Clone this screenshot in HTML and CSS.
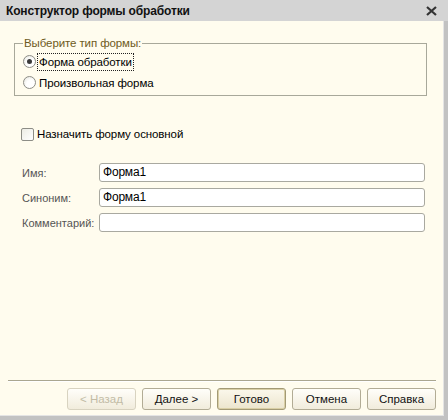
FILE: index.html
```html
<!DOCTYPE html>
<html lang="ru">
<head>
<meta charset="utf-8">
<title>Конструктор формы обработки</title>
<link rel="stylesheet" href="styles.css">
</head>
<body>
<div class="window">
  <div class="titlebar">
    <span class="title">Конструктор формы обработки</span>
    <svg class="close" width="11" height="10" viewBox="0 0 11 10"><path d="M1 1 L10 9 M10 1 L1 9" stroke="#333" stroke-width="2.2" fill="none"/></svg>
  </div>
  <div class="client">
    <fieldset class="group">
      <legend class="legend">Выберите тип формы:</legend>
      <div class="radio-row">
        <span class="radio checked"></span>
        <span class="rlabel focus">Форма обработки</span>
      </div>
      <div class="radio-row">
        <span class="radio"></span>
        <span class="rlabel">Произвольная форма</span>
      </div>
    </fieldset>
    <div class="check-row">
      <span class="checkbox"></span>
      <span class="clabel">Назначить форму основной</span>
    </div>
    <div class="fields">
      <span class="flabel">Имя:</span><div class="input">Форма1</div>
      <span class="flabel">Синоним:</span><div class="input">Форма1</div>
      <span class="flabel">Комментарий:</span><div class="input"></div>
    </div>
    <div class="spacer"></div>
    <div class="separator"></div>
    <div class="buttons">
      <div class="btn disabled">&lt; Назад</div>
      <div class="btn">Далее &gt;</div>
      <div class="btn default">Готово</div>
      <div class="btn">Отмена</div>
      <div class="btn">Справка</div>
    </div>
  </div>
</div>
</body>
</html>
```
FILE: styles.css
```css
html, body {
  margin: 0;
  padding: 0;
  background: #c4c4c4;
}
body {
  font-family: "Liberation Sans", Arial, sans-serif;
  font-size: 11px;
  color: #000;
}
.window {
  width: 448px;
  height: 420px;
  display: flex;
  flex-direction: column;
  background: #c2c2c2;
}
.titlebar {
  height: 21px;
  flex: none;
  background: #d4d4d4;
  display: flex;
  align-items: center;
  justify-content: space-between;
  padding: 0 11px 0 6px;
}
.title {
  font-weight: bold;
  font-size: 12px;
  color: #111;
  letter-spacing: -0.15px;
}
.close {
  display: block;
}
.client {
  flex: 1;
  margin: 0 4px 4px 0;
  background: #fffcee;
  border-right: 1px solid #e4e4e4;
  border-bottom: 1px solid #e4e4e4;
  display: flex;
  flex-direction: column;
}
.group {
  margin: 15px 16px 0 14px;
  padding: 1px 0 2px 8px;
  border: 1px solid #a8a89a;
  min-width: 0;
}
.legend {
  color: #6e5a22;
  font-size: 11.5px;
  letter-spacing: -0.1px;
  padding: 0 1px;
  margin-left: 0;
  line-height: 14px;
}
.radio-row {
  display: flex;
  align-items: center;
  height: 21px;
  font-size: 11.5px;
  letter-spacing: -0.1px;
}
.radio {
  width: 11px;
  height: 11px;
  border: 1px solid #8d8d86;
  border-radius: 50%;
  background: radial-gradient(circle at 60% 65%, #ffffff 40%, #e3e3da 100%);
  display: flex;
  align-items: center;
  justify-content: center;
  flex: none;
}
.radio.checked::after {
  content: "";
  width: 5px;
  height: 5px;
  border-radius: 50%;
  background: #3a3a3a;
}
.rlabel {
  margin-left: 1px;
  padding: 0 1px;
  line-height: 16px;
  border: 1px solid transparent;
}
.rlabel.focus {
  border: 1px dotted #222;
}
.check-row {
  display: flex;
  align-items: center;
  height: 16px;
  margin: 30px 0 0 21px;
  font-size: 11.5px;
  letter-spacing: -0.1px;
}
.checkbox {
  width: 11px;
  height: 11px;
  border: 1px solid #8d8d86;
  border-radius: 2px;
  background: linear-gradient(135deg, #ececE4, #ffffff);
  flex: none;
}
.clabel {
  margin-left: 3px;
}
.fields {
  display: grid;
  grid-template-columns: 77px 326px;
  row-gap: 6px;
  margin: 21px 0 0 22px;
  align-items: center;
}
.flabel {
  color: #555;
  font-size: 11px;
}
.input {
  height: 17px;
  border: 1px solid #a9a9a0;
  border-radius: 3px;
  background: #fff;
  padding: 0 3px;
  line-height: 17px;
  color: #000;
  font-size: 12px;
  letter-spacing: -0.2px;
}
.spacer {
  flex: 1;
}
.separator {
  margin: 0 7px 0 8px;
  height: 0;
  border-top: 1px solid #aaa690;
  border-bottom: 1px solid #ffffff;
}
.buttons {
  display: flex;
  justify-content: flex-end;
  gap: 6px;
  margin: 6px 7px 5px 0;
}
.btn {
  width: 67px;
  height: 20px;
  border: 1px solid #b2ac95;
  border-radius: 3px;
  background: linear-gradient(#fffefa, #f1ecdc);
  display: flex;
  align-items: center;
  justify-content: center;
  color: #111;
  font-size: 11.5px;
}
.btn.disabled {
  color: #c2bca6;
  border-color: #d8d3c0;
}
.btn.default {
  border-color: #a39a75;
  box-shadow: inset 0 0 0 1px #d9cfa5;
  background: linear-gradient(#fbf8ec, #ece5cd);
}
```
